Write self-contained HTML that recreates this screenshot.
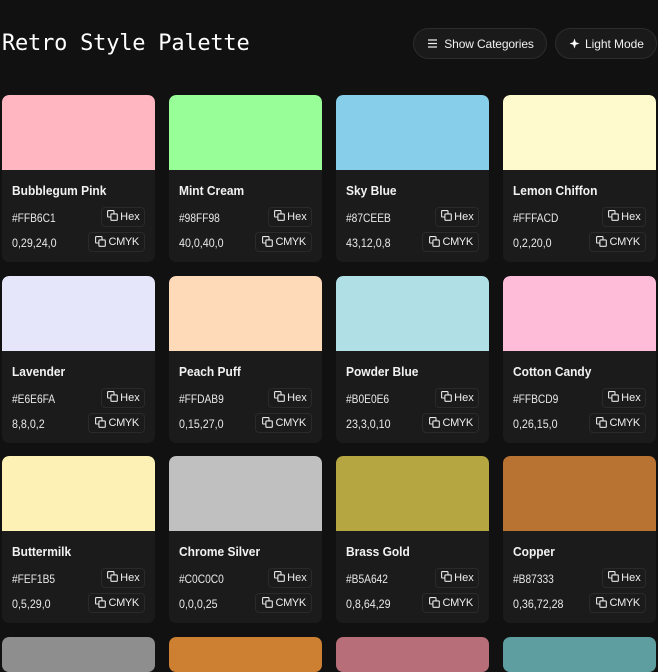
<!DOCTYPE html>
<html><head><meta charset="utf-8">
<style>
html,body{margin:0;padding:0;background:#111;width:658px;height:672px;overflow:hidden;font-family:"Liberation Sans",Arial,sans-serif;color:#fff}
#w{position:relative;width:658px;height:672px;overflow:hidden;background:#111}
h1{position:absolute;left:2px;top:29px;margin:0;font:400 22px/30px "DejaVu Sans Mono","Liberation Mono",monospace;letter-spacing:-0.22px;color:#fff;white-space:nowrap}
.tb{position:absolute;top:27.7px;height:29px;border:1px solid #2c2c2c;border-radius:16px;background:#1a1a1a;font-size:12px;line-height:30px;color:#f0f0f0;white-space:nowrap}
.tb svg{position:absolute;left:13px;top:9px}
.tb span{position:absolute;top:0}
.card{position:absolute;width:153.7px;height:167px;background:#1b1b1b;border-radius:7px;overflow:hidden}
.sw{height:75px;border-radius:7px 7px 0 0}
.last{height:35px}.last .sw{height:35px}
.n{position:absolute;left:10px;top:87.5px;font-size:13px;font-weight:700;line-height:16px;color:#f2f2f2;white-space:nowrap;transform:scaleX(.92);transform-origin:0 50%}
.v{position:absolute;left:10px;font-size:12px;line-height:14px;color:#e8e8e8;white-space:nowrap;transform-origin:0 50%}
.v1{top:115.5px;transform:scaleX(.85)}
.v2{top:140.5px;transform:scaleX(.89)}
.b{position:absolute;right:10.5px;height:18.4px;border:1px solid #2a2a2a;border-radius:4px;font-size:11px;line-height:18px;color:#eee;white-space:nowrap}
.b svg{position:absolute;top:2.7px}
.b1{top:111.5px;width:42px}.b1 svg{left:5px}.b1 span{position:absolute;left:18.3px}
.b2{top:137px;width:54.7px}.b2 svg{left:6px}.b2 span{position:absolute;left:19.3px;letter-spacing:-0.35px}
</style></head><body>
<div id="w">
<h1>Retro Style Palette</h1>
<div class="tb" style="left:413.3px;width:131.4px"><svg width="11" height="11" viewBox="0 0 11 11" fill="none" stroke="#eee" stroke-width="1.2"><path d="M1 2H10M1 5.5H10M1 9H10"/></svg><span style="left:30px;letter-spacing:-0.13px">Show Categories</span></div>
<div class="tb" style="left:555px;width:100px"><svg width="11" height="11" viewBox="0 0 11 11" fill="#fff"><path d="M5.5 0.5 L6.8 4.2 L10.5 5.5 L6.8 6.8 L5.5 10.5 L4.2 6.8 L0.5 5.5 L4.2 4.2Z"/></svg><span style="left:29px;letter-spacing:-0.05px">Light Mode</span></div>

<svg width="0" height="0" style="position:absolute"><defs><symbol id="c" viewBox="0 0 11 11"><rect x="0.6" y="0.6" width="6.4" height="6.4" rx="0.8" fill="none" stroke="#e8e8e8" stroke-width="1.1"/><rect x="3.9" y="3.9" width="6.4" height="6.4" rx="0.8" fill="#1b1b1b" stroke="#e8e8e8" stroke-width="1.1"/></symbol></defs></svg>

<div class="card" style="left:1.7px;top:95px"><div class="sw" style="background:#FFB6C1"></div><div class="n">Bubblegum Pink</div><div class="v v1">#FFB6C1</div><div class="v v2">0,29,24,0</div><div class="b b1"><svg width="11" height="11"><use href="#c"/></svg><span>Hex</span></div><div class="b b2"><svg width="11" height="11"><use href="#c"/></svg><span>CMYK</span></div></div>
<div class="card" style="left:168.7px;top:95px"><div class="sw" style="background:#98FF98"></div><div class="n">Mint Cream</div><div class="v v1">#98FF98</div><div class="v v2">40,0,40,0</div><div class="b b1"><svg width="11" height="11"><use href="#c"/></svg><span>Hex</span></div><div class="b b2"><svg width="11" height="11"><use href="#c"/></svg><span>CMYK</span></div></div>
<div class="card" style="left:335.7px;top:95px"><div class="sw" style="background:#87CEEB"></div><div class="n">Sky Blue</div><div class="v v1">#87CEEB</div><div class="v v2">43,12,0,8</div><div class="b b1"><svg width="11" height="11"><use href="#c"/></svg><span>Hex</span></div><div class="b b2"><svg width="11" height="11"><use href="#c"/></svg><span>CMYK</span></div></div>
<div class="card" style="left:502.7px;top:95px"><div class="sw" style="background:#FFFACD"></div><div class="n">Lemon Chiffon</div><div class="v v1">#FFFACD</div><div class="v v2">0,2,20,0</div><div class="b b1"><svg width="11" height="11"><use href="#c"/></svg><span>Hex</span></div><div class="b b2"><svg width="11" height="11"><use href="#c"/></svg><span>CMYK</span></div></div>

<div class="card" style="left:1.7px;top:276px"><div class="sw" style="background:#E6E6FA"></div><div class="n">Lavender</div><div class="v v1">#E6E6FA</div><div class="v v2">8,8,0,2</div><div class="b b1"><svg width="11" height="11"><use href="#c"/></svg><span>Hex</span></div><div class="b b2"><svg width="11" height="11"><use href="#c"/></svg><span>CMYK</span></div></div>
<div class="card" style="left:168.7px;top:276px"><div class="sw" style="background:#FFDAB9"></div><div class="n">Peach Puff</div><div class="v v1">#FFDAB9</div><div class="v v2">0,15,27,0</div><div class="b b1"><svg width="11" height="11"><use href="#c"/></svg><span>Hex</span></div><div class="b b2"><svg width="11" height="11"><use href="#c"/></svg><span>CMYK</span></div></div>
<div class="card" style="left:335.7px;top:276px"><div class="sw" style="background:#B0E0E6"></div><div class="n">Powder Blue</div><div class="v v1">#B0E0E6</div><div class="v v2">23,3,0,10</div><div class="b b1"><svg width="11" height="11"><use href="#c"/></svg><span>Hex</span></div><div class="b b2"><svg width="11" height="11"><use href="#c"/></svg><span>CMYK</span></div></div>
<div class="card" style="left:502.7px;top:276px"><div class="sw" style="background:#FFBCD9"></div><div class="n">Cotton Candy</div><div class="v v1">#FFBCD9</div><div class="v v2">0,26,15,0</div><div class="b b1"><svg width="11" height="11"><use href="#c"/></svg><span>Hex</span></div><div class="b b2"><svg width="11" height="11"><use href="#c"/></svg><span>CMYK</span></div></div>

<div class="card" style="left:1.7px;top:456px"><div class="sw" style="background:#FEF1B5"></div><div class="n">Buttermilk</div><div class="v v1">#FEF1B5</div><div class="v v2">0,5,29,0</div><div class="b b1"><svg width="11" height="11"><use href="#c"/></svg><span>Hex</span></div><div class="b b2"><svg width="11" height="11"><use href="#c"/></svg><span>CMYK</span></div></div>
<div class="card" style="left:168.7px;top:456px"><div class="sw" style="background:#C0C0C0"></div><div class="n">Chrome Silver</div><div class="v v1">#C0C0C0</div><div class="v v2">0,0,0,25</div><div class="b b1"><svg width="11" height="11"><use href="#c"/></svg><span>Hex</span></div><div class="b b2"><svg width="11" height="11"><use href="#c"/></svg><span>CMYK</span></div></div>
<div class="card" style="left:335.7px;top:456px"><div class="sw" style="background:#B5A642"></div><div class="n">Brass Gold</div><div class="v v1">#B5A642</div><div class="v v2">0,8,64,29</div><div class="b b1"><svg width="11" height="11"><use href="#c"/></svg><span>Hex</span></div><div class="b b2"><svg width="11" height="11"><use href="#c"/></svg><span>CMYK</span></div></div>
<div class="card" style="left:502.7px;top:456px"><div class="sw" style="background:#B87333"></div><div class="n">Copper</div><div class="v v1">#B87333</div><div class="v v2">0,36,72,28</div><div class="b b1"><svg width="11" height="11"><use href="#c"/></svg><span>Hex</span></div><div class="b b2"><svg width="11" height="11"><use href="#c"/></svg><span>CMYK</span></div></div>

<div class="card last" style="left:1.7px;top:637px"><div class="sw" style="background:#8E8E8E"></div></div>
<div class="card last" style="left:168.7px;top:637px"><div class="sw" style="background:#CD7F32"></div></div>
<div class="card last" style="left:335.7px;top:637px"><div class="sw" style="background:#B76E79"></div></div>
<div class="card last" style="left:502.7px;top:637px"><div class="sw" style="background:#5F9EA0"></div></div>
</div>
</body></html>
